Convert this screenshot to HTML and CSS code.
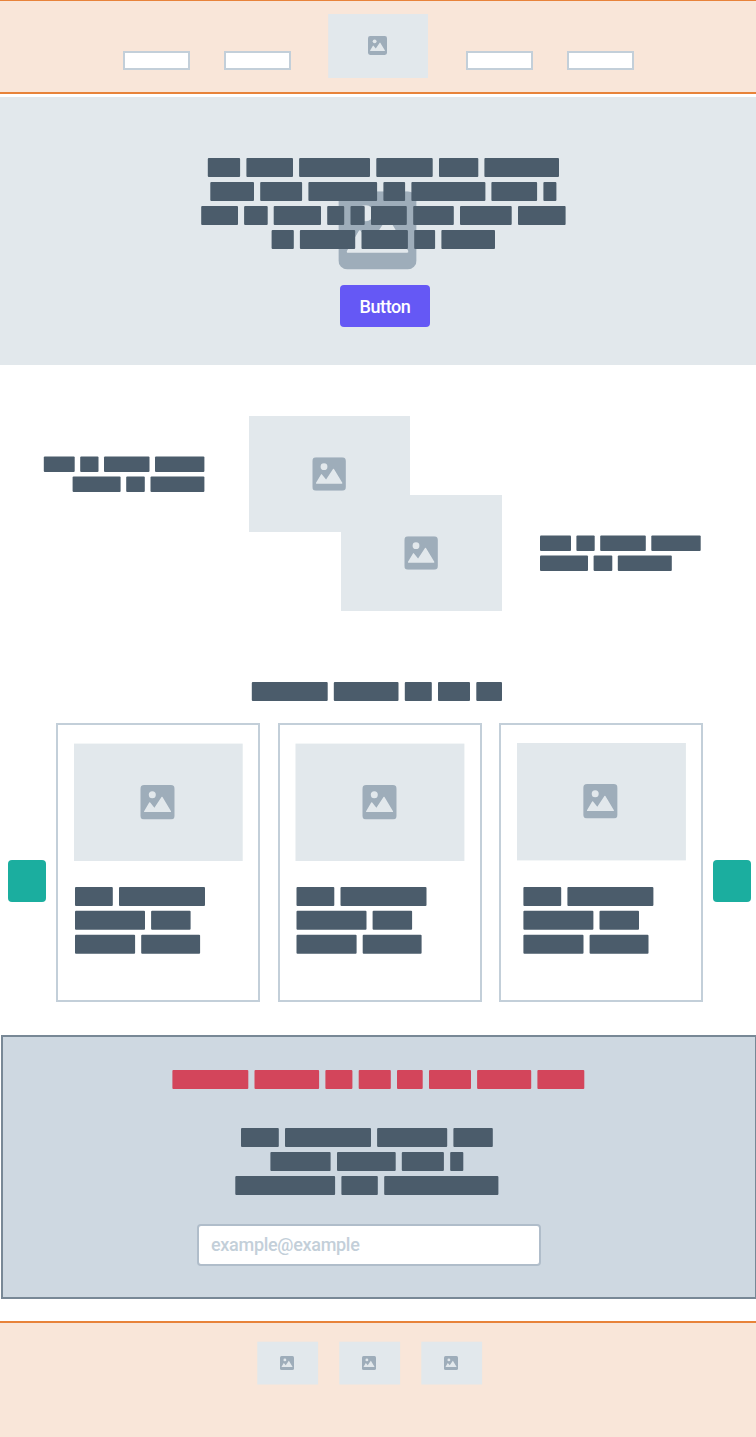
FILE: index.html
```html
<!DOCTYPE html>
<html lang="en">
<head>
<meta charset="utf-8">
<title>Landing page wireframe</title>
<link rel="stylesheet" href="styles.css">
</head>
<body>
<svg class="defs" aria-hidden="true">
  <symbol id="picture" viewBox="0 0 34.4 34.4">
    <rect class="ink" width="34.4" height="34.4" rx="3.9"/>
    <circle class="paper" cx="12" cy="9.7" r="3.5"/>
    <path class="paper" d="M3.8 26.2 8.9 17.6Q9.4 16.8 9.9 17.6L14.1 22.8 21.2 12.1Q21.7 11.5 22.2 12.1L30.7 26.2Q31 27.1 30.2 27.1H4.3Q3.4 27.1 3.8 26.2Z"/>
  </symbol>
  <symbol id="card-copy" viewBox="0 0 131 68" overflow="visible">
    <rect width="37.8" height="19" rx="1"/><rect x="44" width="86" height="19" rx="1"/>
    <rect y="23.8" width="70" height="19" rx="1"/><rect x="76.1" y="23.8" width="39.5" height="19" rx="1"/>
    <rect y="47.7" width="60.1" height="19" rx="1"/><rect x="66.2" y="47.7" width="58.9" height="19" rx="1"/>
  </symbol>
</svg>

<header class="header">
  <nav class="nav"><span class="link"></span><span class="link"></span></nav>
  <svg class="logo" width="100" height="65"><rect class="tile" x=".2" y="0" width="99.8" height="64"/><use href="#picture" x="40" y="22" width="19" height="19"/></svg>
  <nav class="nav"><span class="link"></span><span class="link"></span></nav>
</header>

<section class="hero">
  <svg class="hero-picture" width="80" height="80"><use href="#picture" x="1.4" y="1.2" width="78.2" height="78.2"/></svg>
  <svg class="words hero-copy" width="366" height="92">
    <rect x="6.8" width="32.3" height="19" rx="1"/><rect x="45.4" width="46.6" height="19" rx="1"/><rect x="98.1" width="70.9" height="19" rx="1"/><rect x="175.3" width="56.4" height="19" rx="1"/><rect x="238" width="39.3" height="19" rx="1"/><rect x="283.4" width="74.6" height="19" rx="1"/>
    <rect x="9.3" y="24" width="43.7" height="19" rx="1"/><rect x="59.2" y="24" width="41.9" height="19" rx="1"/><rect x="107.4" y="24" width="68.7" height="19" rx="1"/><rect x="182.4" y="24" width="21.7" height="19" rx="1"/><rect x="210.4" y="24" width="74" height="19" rx="1"/><rect x="290.4" y="24" width="45.7" height="19" rx="1"/><rect x="342.4" y="24" width="13" height="19" rx="1"/>
    <rect x=".2" y="48" width="36.8" height="19" rx="1"/><rect x="43.1" y="48" width="23.6" height="19" rx="1"/><rect x="72.7" y="48" width="47.3" height="19" rx="1"/><rect x="126.2" y="48" width="17" height="19" rx="1"/><rect x="149.5" y="48" width="14.2" height="19" rx="1"/><rect x="170" y="48" width="35.8" height="19" rx="1"/><rect x="212.2" y="48" width="40.6" height="19" rx="1"/><rect x="259" y="48" width="51.7" height="19" rx="1"/><rect x="317" y="48" width="47.6" height="19" rx="1"/>
    <rect x="70.6" y="72" width="22.2" height="19" rx="1"/><rect x="98.9" y="72" width="55.3" height="19" rx="1"/><rect x="160.5" y="72" width="46.4" height="19" rx="1"/><rect x="213.2" y="72" width="20.9" height="19" rx="1"/><rect x="240.4" y="72" width="53.6" height="19" rx="1"/>
  </svg>
  <button class="button">Button</button>
</section>

<section class="feature">
  <svg class="words feature-left" width="162" height="37">
    <rect x=".8" y=".4" width="30.9" height="15.6" rx="1"/><rect x="37.2" y=".4" width="18.3" height="15.6" rx="1"/><rect x="61" y=".4" width="45.5" height="15.6" rx="1"/><rect x="112" y=".4" width="49.4" height="15.6" rx="1"/>
    <rect x="29.6" y="20.4" width="48" height="15.6" rx="1"/><rect x="83.2" y="20.4" width="18.6" height="15.6" rx="1"/><rect x="107.5" y="20.4" width="53.9" height="15.6" rx="1"/>
  </svg>
  <div class="shot shot-back"><svg width="35" height="35"><use href="#picture" x=".3" y=".2" width="33.6" height="33.6"/></svg></div>
  <div class="shot shot-front"><svg width="35" height="35"><use href="#picture" x=".3" y=".2" width="33.6" height="33.6"/></svg></div>
  <svg class="words feature-right" width="162" height="37">
    <rect y=".4" width="31" height="15.6" rx="1"/><rect x="36.4" y=".4" width="18.3" height="15.6" rx="1"/><rect x="60.2" y=".4" width="45.6" height="15.6" rx="1"/><rect x="111.3" y=".4" width="49.4" height="15.6" rx="1"/>
    <rect y="20.4" width="48" height="15.6" rx="1"/><rect x="53.6" y="20.4" width="18.7" height="15.6" rx="1"/><rect x="77.8" y="20.4" width="54" height="15.6" rx="1"/>
  </svg>
</section>

<section class="carousel">
  <svg class="words title" width="252" height="19">
    <rect x=".8" width="75.9" height="19" rx="1"/><rect x="82.8" width="64.7" height="19" rx="1"/><rect x="153.8" width="27" height="19" rx="1"/><rect x="187" width="32" height="19" rx="1"/><rect x="225.3" width="25.7" height="19" rx="1"/>
  </svg>
  <div class="slides">
    <span class="arrow arrow-left"></span>
    <article class="card">
      <svg class="card-picture" width="171" height="119"><rect class="tile" y=".6" width="168.7" height="117.4"/><use href="#picture" x="66.3" y="42" width="34.4" height="34.4"/></svg>
      <svg class="words card-copy" width="132" height="68"><use href="#card-copy" width="131" height="68"/></svg>
    </article>
    <article class="card">
      <svg class="card-picture" width="171" height="119"><rect class="tile" x=".5" y=".6" width="168.9" height="117.4"/><use href="#picture" x="67.3" y="42" width="34.4" height="34.4"/></svg>
      <svg class="words card-copy" width="132" height="68"><use href="#card-copy" x=".5" width="131" height="68"/></svg>
    </article>
    <article class="card card-last">
      <svg class="card-picture" width="171" height="119"><rect class="tile" width="168.9" height="117.4"/><use href="#picture" x="66.2" y="41" width="34.4" height="34.4"/></svg>
      <svg class="words card-copy" width="132" height="68"><use href="#card-copy" x=".4" width="131" height="68"/></svg>
    </article>
    <span class="arrow arrow-right"></span>
  </div>
</section>

<section class="signup">
  <svg class="words signup-title" width="413" height="19">
    <rect x=".4" width="75.9" height="19" rx="1"/><rect x="82.5" width="64.6" height="19" rx="1"/><rect x="153.4" width="27" height="19" rx="1"/><rect x="186.7" width="32.1" height="19" rx="1"/><rect x="225" width="25.7" height="19" rx="1"/><rect x="257" width="42" height="19" rx="1"/><rect x="305.1" width="54.1" height="19" rx="1"/><rect x="365.4" width="46.9" height="19" rx="1"/>
  </svg>
  <svg class="words signup-copy" width="265" height="67">
    <rect x="6" width="37.8" height="19" rx="1"/><rect x="50" width="86" height="19" rx="1"/><rect x="142.1" width="70.1" height="19" rx="1"/><rect x="218.4" width="39.4" height="19" rx="1"/>
    <rect x="35.4" y="24" width="60.2" height="19" rx="1"/><rect x="102" y="24" width="58.7" height="19" rx="1"/><rect x="166.8" y="24" width="42.1" height="19" rx="1"/><rect x="215.2" y="24" width="13.1" height="19" rx="1"/>
    <rect x=".3" y="48" width="99.8" height="19" rx="1"/><rect x="106.4" y="48" width="36.4" height="19" rx="1"/><rect x="149.2" y="48" width="114.2" height="19" rx="1"/>
  </svg>
  <div class="field">example@example</div>
</section>

<footer class="footer">
  <svg width="62" height="44"><rect class="tile" x=".3" y=".7" width="60.8" height="42.8"/><use href="#picture" x="23" y="15" width="14" height="14"/></svg>
  <svg width="62" height="44"><rect class="tile" x=".3" y=".7" width="60.8" height="42.8"/><use href="#picture" x="23" y="15" width="14" height="14"/></svg>
  <svg width="62" height="44"><rect class="tile" x=".3" y=".7" width="60.8" height="42.8"/><use href="#picture" x="23" y="15" width="14" height="14"/></svg>
</footer>
</body>
</html>
```
FILE: styles.css
```css
* { box-sizing: border-box; }
body {
  margin: 0;
  height: 1437px;
  display: flex;
  flex-direction: column;
  background: #fff;
  overflow: hidden;
  font-family: Roboto, "Liberation Sans", sans-serif;
}
svg { display: block; flex: none; }
.defs { position: absolute; width: 0; height: 0; }
.ink { fill: #9eadba; }
.paper, .tile { fill: #e2e8ec; }
.words { fill: #4b5c6b; }

.header {
  height: 94px;
  flex: none;
  display: flex;
  align-items: flex-start;
  padding: 13px 0 0 123px;
  gap: 37px;
  background: #f9e6d9;
  border-top: 1px solid #e8833a;
  border-bottom: 2px solid #e8833a;
}
.nav { display: flex; gap: 34px; margin-top: 37px; }
.nav:last-child { margin-left: 1px; }
.link { width: 67px; height: 19px; background: #fff; border: 2px solid #c3cfd9; }

.hero {
  position: relative;
  flex: none;
  height: 268px;
  margin-top: 3px;
  padding-top: 61px;
  background: #e2e8ec;
}
.hero-picture { position: absolute; left: 337px; top: 93px; }
.hero-copy { position: relative; margin-left: 201px; }
.button {
  display: block;
  width: 90px;
  height: 42px;
  margin: 35px 0 0 340px;
  padding: 2px 0 0;
  border: 0;
  border-radius: 4px;
  background: #6558f5;
  color: #fff;
  font: 500 18px/40px Roboto, sans-serif;
  letter-spacing: -0.4px;
}

.feature {
  flex: none;
  height: 195px;
  margin-top: 51px;
  padding-left: 43px;
  display: flex;
  align-items: flex-start;
}
.feature-left { margin-top: 40px; }
.feature-right { margin: 119px 0 0 38px; }
.shot {
  flex: none;
  width: 161px;
  height: 116px;
  padding: 41px 0 0 63px;
  background: #e2e8ec;
}
.shot-back { margin-left: 44px; }
.shot-front { margin: 79px 0 0 -69px; }

.carousel { flex: none; margin-top: 71px; }
.title { margin-left: 251px; }
.slides {
  display: flex;
  align-items: flex-start;
  margin-top: 22px;
  padding-left: 8px;
}
.arrow {
  flex: none;
  width: 38px;
  height: 42px;
  margin-top: 137px;
  border-radius: 4px;
  background: #1bae9f;
}
.arrow-left { margin-right: 10px; }
.arrow-right { margin-left: 10px; }
.card {
  flex: none;
  width: 204px;
  height: 279px;
  padding: 18px 0 0 16px;
  border: 2px solid #c3cfd9;
}
.card + .card { margin-left: 18px; padding-left: 15px; }
.card + .card-last { margin-left: 17px; padding-left: 16px; }
.card-copy { margin: 25px 0 0 1px; }
.card-last .card-copy { margin-left: 6px; }

.signup {
  flex: none;
  width: 756px;
  height: 264px;
  margin: 33px 0 0 1px;
  padding-top: 33px;
  background: #ced8e1;
  border: 2px solid #788896;
}
.signup-title { margin-left: 169px; fill: #d3455b; }
.signup-copy { margin: 39px 0 0 232px; }
.field {
  width: 344px;
  height: 42px;
  margin: 29px 0 0 194px;
  padding: 0 12px;
  background: #fff;
  border: 2px solid #b0bdca;
  border-radius: 4px;
  color: #c3cfd9;
  font-weight: 500;
  font-size: 18px;
  line-height: 38px;
  letter-spacing: -0.3px;
}

.footer {
  flex: 1;
  display: flex;
  gap: 20px;
  margin-top: 22px;
  padding: 18px 0 0 257px;
  background: #f9e6d9;
  border-top: 2px solid #e8833a;
}
```
